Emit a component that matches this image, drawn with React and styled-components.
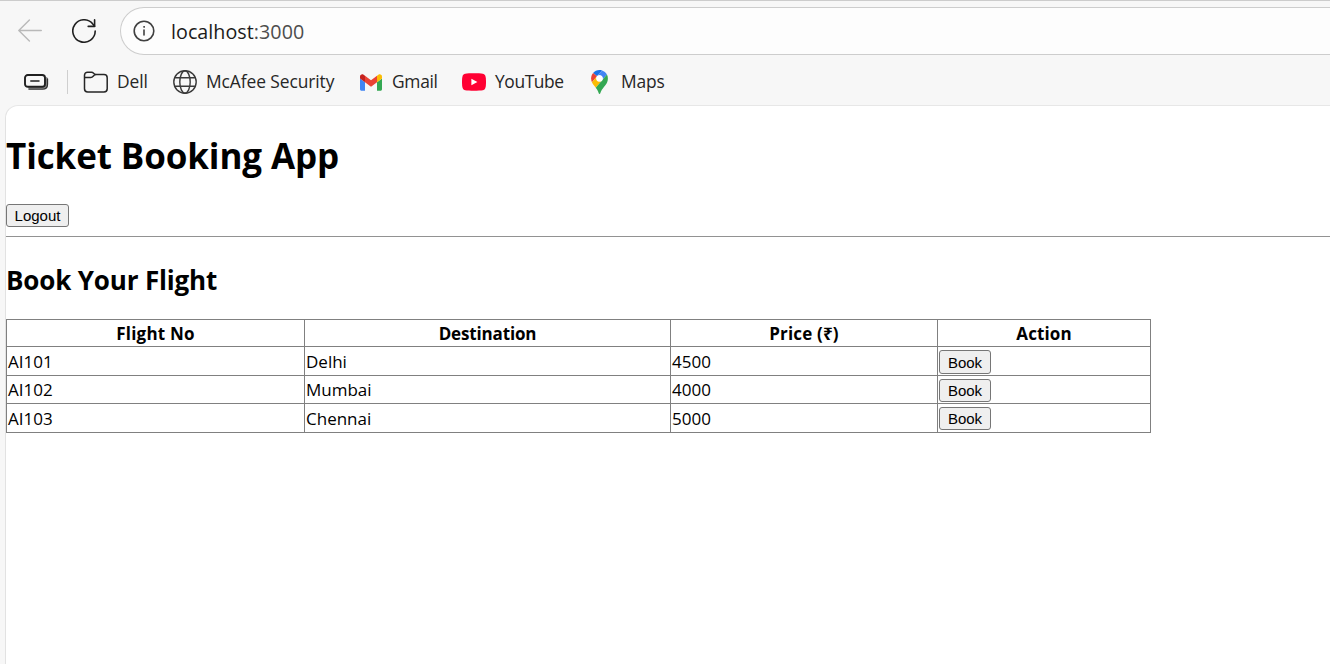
import React from "react";
import styled, { createGlobalStyle } from "styled-components";

const GlobalStyle = createGlobalStyle`
  body {
    margin: 0;
    background: #f7f7f7;
    font-family: "Segoe UI", "Open Sans", "Noto Sans", sans-serif;
    color: #000;
    overflow: hidden;
  }
`;

const Window = styled.div`
  width: 100%;
  height: 664px;
  box-sizing: border-box;
  display: flex;
  flex-direction: column;
  border-top: 1px solid #cccccc;
  background: #f7f7f7;
`;

const Toolbar = styled.header`
  display: flex;
  align-items: center;
  height: 60px;
  flex: none;
`;

const NavButton = styled.div`
  display: flex;
  width: 24px;
  height: 24px;
  margin-left: ${(p) => p.$gap}px;
`;

const AddressBar = styled.div`
  display: flex;
  align-items: center;
  flex: 1;
  height: 48px;
  box-sizing: border-box;
  margin-left: 24px;
  padding-left: 12px;
  border: 1px solid #cdcdcd;
  border-right: 0;
  border-radius: 24px 0 0 24px;
  background: #fdfdfd;
`;

const Url = styled.span`
  margin-left: 16px;
  padding-top: 1px;
  font-size: 19.7px;
  line-height: 26px;
  letter-spacing: 0.04px;
  color: #1b1b1b;
`;

const Port = styled.span`
  color: #4d4d4d;
`;

const Bookmarks = styled.nav`
  display: flex;
  align-items: center;
  height: 42px;
  flex: none;
  padding: 0 0 2px 24px;
`;

const Divider = styled.span`
  width: 1px;
  height: 24px;
  margin: 0 15px 0 18px;
  background: #cfcfcf;
`;

const Bookmark = styled.span`
  display: flex;
  align-items: center;
  width: ${(p) => p.$width}px;
  gap: ${(p) => p.$gap}px;
  flex: none;
`;

const Label = styled.span`
  margin-top: -2px;
  font-size: 17.4px;
  line-height: 24px;
  letter-spacing: ${(p) => p.$track};
  white-space: nowrap;
  color: #262626;
`;

const Page = styled.main`
  flex: 1;
  margin-left: 5px;
  border-top: 1px solid #e7e7e7;
  border-left: 1px solid #e2e2e2;
  border-top-left-radius: 13px;
  background: #fff;
`;

const Title = styled.h1`
  margin: 26px 0 24px;
  font-size: 35px;
  line-height: 48px;
  letter-spacing: -0.12px;
`;

const Subtitle = styled.h2`
  margin: 25px 0 21px;
  font-size: 26px;
  line-height: 36px;
  letter-spacing: -0.16px;
`;

const Button = styled.button`
  display: block;
  box-sizing: border-box;
  width: ${(p) => p.$width}px;
  height: ${(p) => p.$height || 23}px;
  padding: ${(p) => (p.$height === 24 ? "1px 0 0" : "0")};
  border: 1px solid #767676;
  border-radius: 3px;
  background: #efefef;
  color: #000;
  font: 15px/19px "Liberation Sans", Arial, sans-serif;
`;

const Rule = styled.hr`
  height: 1px;
  margin: 9px 0 0;
  border: 0;
  background: #929292;
`;

const Table = styled.table`
  table-layout: fixed;
  width: 1145px;
  border-collapse: separate;
  border-spacing: 0;
  border-top: 1px solid #808080;
  border-left: 1px solid #808080;
  font-size: 17px;
  line-height: 24px;
`;

const Column = styled.col`
  width: ${(p) => p.$width}px;
`;

const Row = styled.tr`
  height: ${(p) => p.$height}px;
`;

const HeadCell = styled.th`
  box-sizing: border-box;
  padding: 2px 0 0;
  border-right: 1px solid #808080;
  border-bottom: 1px solid #808080;
  letter-spacing: ${(p) => p.$track};
`;

const Cell = styled.td`
  box-sizing: border-box;
  padding: 1px 1px 0;
  border-right: 1px solid #808080;
  border-bottom: 1px solid #808080;
`;

const line = { fill: "none", strokeLinecap: "round", strokeLinejoin: "round" };

const BackIcon = () => (
  <svg width="24" height="24" viewBox="0 0 24 24" stroke="#b9b9b9" strokeWidth="1.4" {...line}>
    <path d="M23.3 11.5H.8M11.4 1 .8 11.5l10.6 10.5" />
  </svg>
);

const ReloadIcon = () => (
  <svg width="24" height="24" viewBox="0 0 24 24" stroke="#202020" strokeWidth="1.6" {...line}>
    <path d="M23.2 12A11.2 11.2 0 1 1 21 5.3L22.6 7.2" />
    <path d="M22.6 .9v6.5h-6.4" />
  </svg>
);

const InfoIcon = () => (
  <svg width="22" height="22" viewBox="0 0 22 22" stroke="#404040" strokeWidth="1.6" {...line}>
    <circle cx="11" cy="11" r="9.8" />
    <path d="M11 10v5" />
    <circle cx="11" cy="6.9" r=".45" fill="#404040" strokeWidth="1" />
  </svg>
);

const StackIcon = () => (
  <svg width="25" height="18" viewBox="0 0 25 18" {...line}>
    <path d="M5 14.8H18.5c2.6 0 4-1.6 4-4V5" stroke="#8c8c8c" strokeWidth="2" />
    <path d="M5 16.2h13.5c3.2 0 5-1.8 5-5V5.8" stroke="#303030" strokeWidth="1.3" />
    <rect x="1" y="2" width="20" height="11.8" rx="2.8" fill="#f7f7f7" stroke="#202020" strokeWidth="1.9" />
    <path d="M6.8 7.9h8.2" stroke="#202020" strokeWidth="1.5" />
  </svg>
);

const FolderIcon = () => (
  <svg width="25" height="24" viewBox="0 0 25 24" stroke="#262626" strokeWidth="1.5" {...line}>
    <path d="M1.5 5.2a3 3 0 0 1 3-3h4c2 0 2.7 2.3 4.3 2.3H21a3.2 3.2 0 0 1 3.2 3.2v11.1A3.2 3.2 0 0 1 21 22H4.7a3.2 3.2 0 0 1-3.2-3.2z" />
    <path d="M1.7 7.5h6.1c2.6 0 2.6-3 5-3" />
  </svg>
);

const GlobeIcon = () => (
  <svg width="24" height="24" viewBox="0 0 24 24" stroke="#3a3a3a" strokeWidth="1.4" {...line}>
    <circle cx="12" cy="12" r="11.2" />
    <ellipse cx="12" cy="12" rx="5.2" ry="11.2" />
    <path d="M2 7.7h20M2 16.3h20" />
  </svg>
);

const GmailIcon = () => (
  <svg width="22" height="17" viewBox="52 42 88 66">
    <path fill="#4285f4" d="M58 108h14V74L52 59v43c0 3.3 2.7 6 6 6" />
    <path fill="#34a853" d="M120 108h14c3.3 0 6-2.7 6-6V59l-20 15" />
    <path fill="#fbbc04" d="M120 48v26l20-15v-8c0-7.4-8.5-11.6-14.4-7.2" />
    <path fill="#ea4335" d="M72 74V48l24 18 24-18v26L96 92" />
    <path fill="#c5221f" d="M52 51v8l20 15V48l-5.6-4.2C60.5 39.4 52 43.6 52 51" />
  </svg>
);

const YouTubeIcon = () => (
  <svg width="24" height="18" viewBox="0 0 24 18">
    <path fill="#ff0033" d="M3.2 .8C6.8 .2 17.2 .2 20.8 .8 23.3 1.3 24 3.2 24 9s-.7 7.7-3.2 8.2C17.2 17.8 6.8 17.8 3.2 17.2 .7 16.7 0 14.8 0 9S.7 1.3 3.2 .8" />
    <path fill="#fff" d="m9.4 5.7 6 3.3-6 3.3z" />
  </svg>
);

const MapsIcon = () => (
  <svg width="17" height="24" viewBox="0 0 92.3 132.3">
    <path fill="#1a73e8" d="M60.2 2.2C55.8.8 51 0 46.1 0 32 0 19.3 6.4 10.8 16.5l21.8 18.3z" />
    <path fill="#ea4335" d="M10.8 16.5C4.1 24.5 0 34.9 0 46.1c0 8.7 1.7 15.7 4.6 22l28-33.3z" />
    <path fill="#4285f4" d="M46.2 28.5c9.8 0 17.7 7.9 17.7 17.7 0 4.3-1.6 8.3-4.2 11.4 0 0 13.9-16.6 27.5-32.7-5.6-10.8-15.3-19-27-22.7L32.6 34.8c3.3-3.8 8.1-6.3 13.6-6.3" />
    <path fill="#fbbc04" d="M46.2 63.8c-9.8 0-17.7-7.9-17.7-17.7 0-4.3 1.5-8.3 4.1-11.3l-28 33.3c4.8 10.6 12.8 19.2 21 29.9l34.1-40.5c-3.3 3.9-8.1 6.3-13.5 6.3" />
    <path fill="#34a853" d="M59.1 109.2c15.4-24.1 33.3-35 33.3-63 0-7.7-1.9-14.9-5.2-21.3L25.6 98c2.6 3.4 5.3 7.3 7.9 11.3 9.4 14.5 6.8 23.1 12.8 23.1s3.4-8.7 12.8-23.2" />
    <circle cx="46.2" cy="46.2" r="17.7" fill="#fff" />
  </svg>
);

const bookmarks = [
  { label: "Dell", Icon: FolderIcon, width: 90, gap: 9, track: "-0.1px" },
  { label: "McAfee Security", Icon: GlobeIcon, width: 187, gap: 9, track: "-0.08px" },
  { label: "Gmail", Icon: GmailIcon, width: 102, gap: 10, track: "-0.3px" },
  { label: "YouTube", Icon: YouTubeIcon, width: 129, gap: 9, track: "-0.4px" },
  { label: "Maps", Icon: MapsIcon, width: 80, gap: 13, track: "-0.15px" },
];

const headings = [
  { text: "Flight No", track: "0.2px" },
  { text: "Destination", track: "-0.15px" },
  { text: "Price (₹)", track: "0.15px" },
  { text: "Action", track: "0.1px" },
];

const flights = [
  { no: "AI101", destination: "Delhi", price: 4500, height: 29, button: 24 },
  { no: "AI102", destination: "Mumbai", price: 4000, height: 28, button: 23 },
  { no: "AI103", destination: "Chennai", price: 5000, height: 29, button: 23 },
];

export default function App() {
  return (
    <Window>
      <GlobalStyle />
      <Toolbar>
        <NavButton $gap={18}><BackIcon /></NavButton>
        <NavButton $gap={30}><ReloadIcon /></NavButton>
        <AddressBar>
          <InfoIcon />
          <Url>localhost<Port>:3000</Port></Url>
        </AddressBar>
      </Toolbar>
      <Bookmarks>
        <StackIcon />
        <Divider />
        {bookmarks.map(({ label, Icon, width, gap, track }) => (
          <Bookmark key={label} $width={width} $gap={gap}>
            <Icon />
            <Label $track={track}>{label}</Label>
          </Bookmark>
        ))}
      </Bookmarks>
      <Page>
        <Title>Ticket Booking App</Title>
        <Button $width={63}>Logout</Button>
        <Rule />
        <Subtitle>Book Your Flight</Subtitle>
        <Table>
          <colgroup>
            <Column $width={298} />
            <Column $width={366} />
            <Column $width={267} />
            <Column $width={213} />
          </colgroup>
          <thead>
            <Row $height={27}>
              {headings.map((h) => (
                <HeadCell key={h.text} $track={h.track}>{h.text}</HeadCell>
              ))}
            </Row>
          </thead>
          <tbody>
            {flights.map((f) => (
              <Row key={f.no} $height={f.height}>
                <Cell>{f.no}</Cell>
                <Cell>{f.destination}</Cell>
                <Cell>{f.price}</Cell>
                <Cell><Button $width={52} $height={f.button}>Book</Button></Cell>
              </Row>
            ))}
          </tbody>
        </Table>
      </Page>
    </Window>
  );
}
